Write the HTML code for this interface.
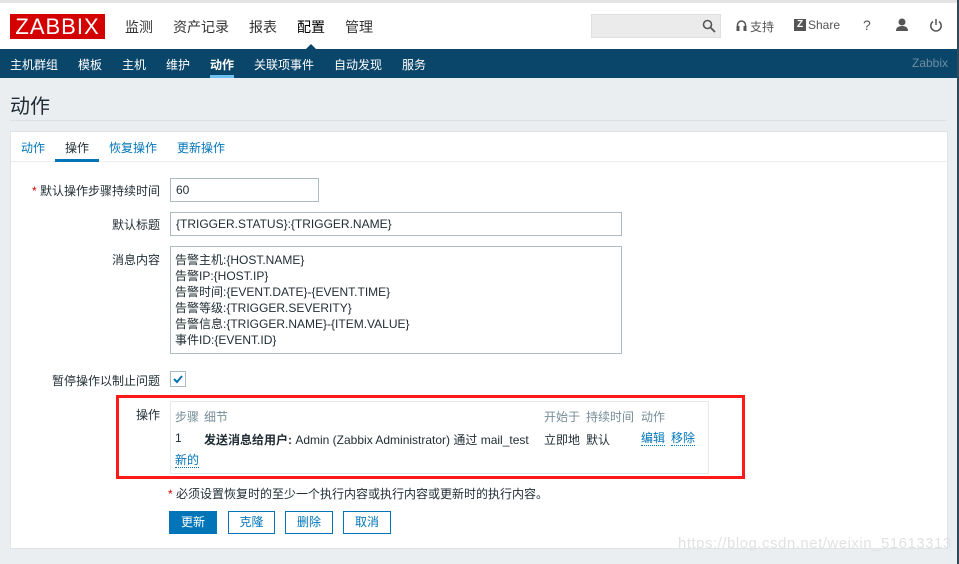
<!DOCTYPE html>
<html><head><meta charset="utf-8"><style>
*{margin:0;padding:0;box-sizing:border-box}
body{width:959px;height:564px;overflow:hidden;background:#ebeef0;font-family:"Liberation Sans","Noto Sans CJK SC",sans-serif;font-size:12px;color:#1f2c33;position:relative}
.a{position:absolute;white-space:nowrap}
.top{left:0;top:0;width:957px;height:49px;background:#fff;border-top:3px solid #e4e4e4}
.nav{left:0;top:49px;width:957px;height:29px;background:#0a466a}
.nav span{position:absolute;top:7px;color:#fff;font-size:12px}
.mm{top:17px;font-size:14px;color:#333}
.lbl{text-align:right;width:160px;left:0;font-size:12px;color:#1f2c33}
.inp{background:#fff;border:1px solid #acbbc2;padding:4px 5px;font-size:12px}
.btn{top:511px;height:23px;border:1px solid #0275b8;color:#0275b8;background:#fff;text-align:center;line-height:21px;font-size:12px}
.lnk{color:#0275b8;border-bottom:1px dotted #0275b8;line-height:14px}
</style></head><body>
<div class="a top"></div>
<div class="a" style="left:10px;top:14px;width:95px;height:25px;background:#d40000;color:#fff;font-size:22px;line-height:25px;text-align:center;letter-spacing:1px">ZABBIX</div>
<div class="a mm" style="left:125px">监测</div>
<div class="a mm" style="left:173px">资产记录</div>
<div class="a mm" style="left:249px">报表</div>
<div class="a mm" style="left:297px;color:#000">配置</div>
<div class="a mm" style="left:345px">管理</div>
<div class="a" style="left:306px;top:44px;width:0;height:0;border-left:5px solid transparent;border-right:5px solid transparent;border-bottom:5px solid #0a466a"></div>
<div class="a" style="left:591px;top:14px;width:130px;height:24px;background:#ebebeb;border:1px solid #e0e0e0"></div>
<svg class="a" style="left:702px;top:19px" width="14" height="14"><circle cx="5.5" cy="5.5" r="4" fill="none" stroke="#555" stroke-width="1.6"/><line x1="8.5" y1="8.5" x2="13" y2="13" stroke="#555" stroke-width="1.8"/></svg>
<svg class="a" style="left:736px;top:19px" width="11" height="13"><path d="M1.5 8 V6 a4 4 0 0 1 8 0 V8" fill="none" stroke="#555" stroke-width="1.5"/><rect x="0.5" y="7" width="3" height="5" fill="#555"/><rect x="7.5" y="7" width="3" height="5" fill="#555"/></svg>
<div class="a" style="left:750px;top:18px;font-size:12px;color:#555">支持</div>
<div class="a" style="left:794px;top:19px;width:12px;height:12px;background:#555;color:#fff;font-size:10px;font-weight:bold;text-align:center;line-height:12px">Z</div>
<div class="a" style="left:808px;top:18px;font-size:12px;color:#555">Share</div>
<div class="a" style="left:863px;top:17px;font-size:14px;color:#555">?</div>
<svg class="a" style="left:895px;top:18px" width="14" height="13"><circle cx="7" cy="4" r="3.5" fill="#555"/><path d="M1 13 Q1 8 7 8 Q13 8 13 13Z" fill="#555"/></svg>
<svg class="a" style="left:929px;top:18px" width="14" height="14"><path d="M4 3.5 A5.2 5.2 0 1 0 10 3.5" fill="none" stroke="#555" stroke-width="1.5"/><line x1="7" y1="1" x2="7" y2="7" stroke="#555" stroke-width="1.5"/></svg>
<div class="a nav">
<span style="left:10px">主机群组</span><span style="left:78px">模板</span><span style="left:122px">主机</span><span style="left:166px">维护</span><span style="left:210px;font-weight:bold">动作</span><span style="left:254px">关联项事件</span><span style="left:334px">自动发现</span><span style="left:402px">服务</span>
<span style="left:912px;top:7px;color:#6d8ea3">Zabbix</span>
<div style="position:absolute;left:210px;top:26px;width:24px;height:3px;background:#6ec0f1"></div>
</div>
<div class="a" style="left:957px;top:0;width:2px;height:564px;background:#2f4a5a"></div>
<div class="a" style="left:10px;top:90px;font-size:20px;color:#1f2c33">动作</div>
<div class="a" style="left:10px;top:120px;width:937px;height:1px;background:#dde1e3"></div>
<div class="a" style="left:10px;top:131px;width:938px;height:418px;background:#fff;border:1px solid #dfe4e7"></div>
<div class="a" style="left:11px;top:161px;width:936px;height:1px;background:#ebeef0"></div>
<div class="a" style="left:21px;top:139px;color:#0275b8">动作</div>
<div class="a" style="left:65px;top:139px;color:#1f2c33">操作</div>
<div class="a" style="left:55px;top:159px;width:44px;height:3px;background:#0275b8"></div>
<div class="a" style="left:109px;top:139px;color:#0275b8">恢复操作</div>
<div class="a" style="left:177px;top:139px;color:#0275b8">更新操作</div>

<div class="a lbl" style="top:182px"><span style="color:#d40000">* </span>默认操作步骤持续时间</div>
<div class="a inp" style="left:170px;top:178px;width:149px;height:24px">60</div>
<div class="a lbl" style="top:216px">默认标题</div>
<div class="a inp" style="left:170px;top:212px;width:452px;height:24px">{TRIGGER.STATUS}:{TRIGGER.NAME}</div>
<div class="a lbl" style="top:251px">消息内容</div>
<div class="a inp" style="left:170px;top:246px;width:452px;height:108px;line-height:16px;padding-top:5px;padding-left:4px">告警主机:{HOST.NAME}<br>告警IP:{HOST.IP}<br>告警时间:{EVENT.DATE}-{EVENT.TIME}<br>告警等级:{TRIGGER.SEVERITY}<br>告警信息:{TRIGGER.NAME}-{ITEM.VALUE}<br>事件ID:{EVENT.ID}</div>
<div class="a lbl" style="top:372px">暂停操作以制止问题</div>
<div class="a" style="left:170px;top:371px;width:16px;height:16px;border:1px solid #acbbc2;background:#fff"></div>
<svg class="a" style="left:172px;top:373px" width="12" height="12"><path d="M2 6 L5 9 L10 3" fill="none" stroke="#0275b8" stroke-width="2"/></svg>

<div class="a" style="left:116px;top:395px;width:629px;height:84px;border:3px solid #ff1a1a"></div>
<div class="a lbl" style="top:406px">操作</div>
<div class="a" style="left:170px;top:401px;width:539px;height:73px;border:1px solid #e6e9eb"></div>
<div class="a" style="left:175px;top:408px;color:#768d99">步骤</div>
<div class="a" style="left:204px;top:408px;color:#768d99">细节</div>
<div class="a" style="left:544px;top:408px;color:#768d99">开始于</div>
<div class="a" style="left:586px;top:408px;color:#768d99">持续时间</div>
<div class="a" style="left:641px;top:408px;color:#768d99">动作</div>
<div class="a" style="left:175px;top:431px">1</div>
<div class="a" style="left:204px;top:431px"><b>发送消息给用户:</b> Admin (Zabbix Administrator) 通过 mail_test</div>
<div class="a" style="left:544px;top:431px">立即地</div>
<div class="a" style="left:586px;top:431px">默认</div>
<div class="a lnk" style="left:641px;top:431px">编辑</div>
<div class="a lnk" style="left:671px;top:431px">移除</div>
<div class="a lnk" style="left:175px;top:453px">新的</div>

<div class="a" style="left:168px;top:485px"><span style="color:#d40000">*</span> 必须设置恢复时的至少一个执行内容或执行内容或更新时的执行内容。</div>
<div class="a btn" style="left:169px;width:48px;background:#0275b8;color:#fff">更新</div>
<div class="a btn" style="left:228px;width:47px">克隆</div>
<div class="a btn" style="left:285px;width:48px">删除</div>
<div class="a btn" style="left:343px;width:48px">取消</div>
<div class="a" style="left:678px;top:535px;font-size:15px;letter-spacing:0.5px;color:#e0e2e4">https://blog.csdn.net/weixin_51613313</div>
</body></html>
